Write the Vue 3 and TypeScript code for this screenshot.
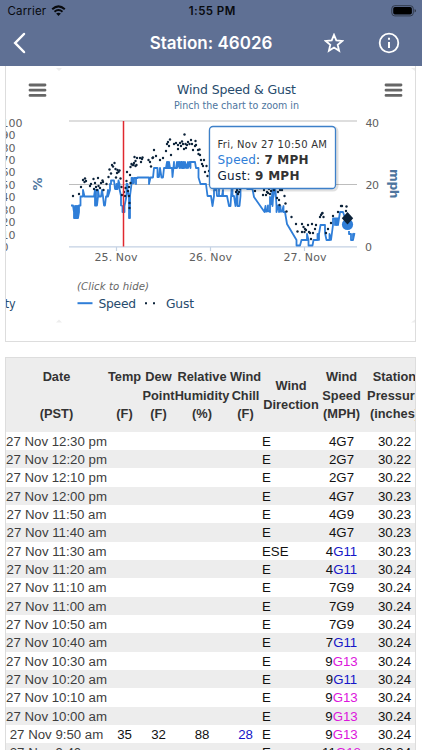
<script setup lang="ts">
interface Row {
  date: string
  temp?: string
  dew?: string
  rh?: string
  chill?: string
  dir: string
  speed: string
  gust: string
  level: 'calm' | 'fresh' | 'strong'
  pressure: string
}

function wind(date: string, speed: string, gust: string, pressure: string, dir = 'E'): Row {
  const g = Number(gust)
  return {
    date: '27 Nov ' + date, dir, speed, gust, pressure,
    level: g >= 13 ? 'strong' : g >= 11 ? 'fresh' : 'calm',
  }
}

const rows: Row[] = [
  wind('12:30 pm', '4', '7', '30.22'),
  wind('12:20 pm', '2', '7', '30.22'),
  wind('12:10 pm', '2', '7', '30.22'),
  wind('12:00 pm', '4', '7', '30.23'),
  wind('11:50 am', '4', '9', '30.23'),
  wind('11:40 am', '4', '7', '30.23'),
  wind('11:30 am', '4', '11', '30.23', 'ESE'),
  wind('11:20 am', '4', '11', '30.24'),
  wind('11:10 am', '7', '9', '30.24'),
  wind('11:00 am', '7', '9', '30.24'),
  wind('10:50 am', '7', '9', '30.24'),
  wind('10:40 am', '7', '11', '30.24'),
  wind('10:30 am', '9', '13', '30.24'),
  wind('10:20 am', '9', '11', '30.24'),
  wind('10:10 am', '9', '13', '30.24'),
  wind('10:00 am', '9', '13', '30.24'),
  { ...wind('9:50 am', '9', '13', '30.24'), temp: '35', dew: '32', rh: '88', chill: '28' },
  wind('9:40 am', '11', '18', '30.24'),
]

const columns: string[][] = [
  ['Date', '', '(PST)'],
  ['Temp', '', '(F)'],
  ['Dew', 'Point', '(F)'],
  ['Relative', 'Humidity', '(%)'],
  ['Wind', 'Chill', '(F)'],
  ['Wind', 'Direction'],
  ['Wind', 'Speed', '(MPH)'],
  ['Station', 'Pressure', '(inches)'],
]

const humidityTicks = [100, 90, 80, 70, 60, 50, 40, 30, 20, 10, 0]

const speedPath =
  'M71 205.5H73L74 212V218H75V206V218H76V206V218H77V206V218H78V206V218L79 212V205.5H80.5V196.5H83V190L84.5 196.5H94L95 190V205.5H96V190V205.5H97L98 196.5V190L99 196.5H101L102 190L103 196.5L104 205.5H105L106 196.5H107L108 190V196.5L110 190V184H111V180.5H114L115 189H116.5V184L117.5 189L118.5 180.5L119.5 184V189L121 196V205.5L122.5 206V212H124.5V206L126.5 196V184H127.5V190L129 196.5V218H130V196L131.5 184V178H132.5V183H134V178H136V184V178H137.5V177.5H149V184L150.5 177.5H153L154 168H157.5V177H159L160 168L161.5 177.5H163L164 168H166L167 162V168H168V162L169 168V162L170 168H172L172.5 177L174 162V168H176L177 162V168L178.5 162L179.5 168V162L181 168V162H182V168H183.5V162L185 168V162L186.5 168L188 162V168L189.5 162L190.5 168V162H195L196 168H198.5V177.5L200.5 184H206L207.5 196H211L212.5 206L214 196V190H216V184L217 196H219V184V196H222L223 190V196H227L229 206H230.5L231.5 190L232.5 184V196H234L235.5 206L236.5 196L237.5 184V206H239.5L240.5 196V190L242 180V185H245L246 180L247 189H252.5L254 197L264.5 212L265.5 206V211.5H267L268 205.5V211L270 212V197L271.5 204L272.5 188V206L274 184L275.5 197V190L276.5 206V212L278 205.5H279V212L280.5 206V211.5H282L283.5 206V212H285L287 224L296.5 240V245.5H300L301.5 240H307V234L308.5 240V245.5H312.5L313.5 240H317.5V234L319 240V234L320.5 225H325V233L326.5 240H329.5V234L331 240L333 225V218.5H335V225V218.5H336.5V225V218.5H338V225L340 212H343L345 218V223.5L348 225'

const gusts: [number, number][] = [
  [73, 196], [79, 194], [81, 187], [83, 180], [84.5, 182], [85, 178.5], [86, 181], [90, 186], [91, 184],
  [93.5, 179], [94, 189], [95, 183], [96, 187], [97, 190], [98, 178], [98.5, 186], [100, 188], [101, 183],
  [102.5, 180.5], [103, 182], [103.5, 190], [106.5, 184], [108.5, 177], [109.5, 169.5], [111, 173.5],
  [112, 165], [113, 166.5], [114.5, 163], [115.5, 169], [116, 177.5], [117, 173], [117.5, 170],
  [118.5, 172], [119.5, 170.5], [120.5, 178.5], [121.5, 187], [122, 195], [124, 192], [125, 196],
  [125.5, 188], [126.5, 181], [127, 172], [128, 191], [129, 187], [129, 196], [129.5, 203], [129.5, 208],
  [130, 175], [130.5, 183], [130.5, 167], [131.5, 164], [132.5, 165], [133.5, 165], [134, 163],
  [134.5, 157], [135.5, 161], [136.5, 165], [137, 158], [135.5, 166], [140, 158], [141, 162],
  [142, 159], [142.5, 157.5], [148.5, 160], [150, 162], [151, 166.5], [152.5, 158], [154, 150],
  [153, 157.5], [156, 156], [160, 160], [163, 158], [166, 151], [167, 144], [168, 142], [169, 146],
  [170, 139.5], [171, 155], [174, 144], [176, 143], [178, 145], [178, 149], [180, 143], [181, 146],
  [182, 141.5], [183, 144], [184, 149], [184.5, 134.5], [185.5, 144], [186, 148], [187, 145], [188, 142],
  [189.5, 144], [191, 140], [192, 144], [193, 150], [195, 146], [195.5, 141], [196, 145], [198, 150],
  [198.5, 154], [199.5, 149.5], [200, 155], [201, 160], [202, 164], [203, 166], [204, 160], [205, 172],
  [206.5, 166], [207.5, 176], [209, 171],
  [236, 192], [237, 190], [238, 194], [239, 192], [240, 189], [255, 191], [263, 195], [264, 190],
  [266, 195], [267, 192], [268, 193], [269, 189], [270, 194], [271, 191], [274, 190], [277, 198],
  [278, 192], [279, 200], [280, 190], [279.5, 205], [282, 190], [284.5, 196], [285.5, 203.5], [286.5, 211.5],
  [291.5, 217], [296, 224], [297.5, 231.5], [302, 224], [302, 232], [303.5, 227], [304.5, 232],
  [305, 229], [306, 230], [308, 225], [309, 232], [310, 233], [311, 239], [312, 224], [313, 233],
  [315, 229], [316, 225], [320, 217], [321, 215], [322, 213.5], [322.5, 213], [323.5, 217],
  [326, 233], [328, 229], [331, 223], [333, 216], [338, 212], [341, 206], [342, 206], [346, 211], [346.5, 206.5],
]
</script>

<template>
  <div class="screen">
    <header class="top">
      <div class="status">
        <div class="carrier">
          <span>Carrier</span>
          <svg width="15" height="12" viewBox="0 0 15 12" fill="none" stroke="#080a0e">
            <path d="M1.2 4.2Q7.5 -1.4 13.8 4.2" stroke-width="2" />
            <path d="M3.5 6.7Q7.5 3.2 11.5 6.7" stroke-width="1.9" />
            <path d="M7.5 11L5.1 8.6Q7.5 6.8 9.9 8.6Z" fill="#080a0e" stroke="none" />
          </svg>
        </div>
        <span class="clock">1:55 PM</span>
        <svg class="battery" width="26" height="12" viewBox="0 0 26 12">
          <rect x=".8" y=".7" width="21.5" height="10.2" rx="3" fill="none" stroke="#2d3443" stroke-width=".9" />
          <rect x="2.2" y="2.1" width="18.7" height="7.4" rx="1.7" fill="#000" />
          <path d="M23.6 4V7.6Q25 7 25 5.8T23.6 4" fill="#2d3443" />
        </svg>
      </div>
      <div class="nav">
        <svg class="back" width="14" height="22" viewBox="0 0 14 22"><path d="M11 2L2.2 11L11 20" fill="none" stroke="#fff" stroke-width="2.5" stroke-linecap="round" /></svg>
        <h1>Station: 46026</h1>
        <div class="actions">
          <svg width="20" height="20" viewBox="0 0 20 20" fill="none" stroke="#fff" stroke-width="1.8"><path d="M10 1.800L12.300 7.400L18.300 7.900L13.700 11.800L15.100 17.700L10 14.500L4.900 17.700L6.300 11.800L1.700 7.900L7.700 7.400Z" /></svg>
          <svg width="22" height="22" viewBox="0 0 22 22"><circle cx="11" cy="11" r="9.300" fill="none" stroke="#fff" stroke-width="1.800" /><path d="M10 5.800H12V7.800H10ZM10 10H12V16H10Z" fill="#fff" /></svg>
        </div>
      </div>
    </header>

    <section class="chart-card">
      <svg class="chart" width="409" height="275" viewBox="6 66 409 275">
        <path d="M56 68h6l-3 3zM56 322.500h6l-3-3zM411 68h4v3zM411 322.500h4v-3z" fill="#ededed" />
        <g stroke="#666" stroke-width="2.800" stroke-linecap="round">
          <path d="M30 85H45M30 90.200H45M30 95.400H45M386 85H401M386 90.200H401M386 95.400H401" />
        </g>

        <g class="tick">
          <text v-for="(t, i) in humidityTicks" :key="t" :x="t === 100 ? 22.5 : t === 0 ? 8.5 : 15.5" :y="126.6 + i * 12.45" text-anchor="end">{{ t }}</text>
        </g>
        <text class="unit" transform="translate(42 190.500) rotate(-90)" font-size="12.500" textLength="13" lengthAdjust="spacingAndGlyphs">%</text>
        <text class="label" x="15.700" y="307.500" font-size="12.500" text-anchor="end" textLength="11" lengthAdjust="spacingAndGlyphs">ty</text>

        <text class="label" x="177" y="94" font-size="12.500" textLength="119">Wind Speed &amp; Gust</text>
        <text class="sub" x="174" y="109" font-size="10" textLength="125" lengthAdjust="spacingAndGlyphs">Pinch the chart to zoom in</text>

        <path d="M69 121H357M69 184.500H357" stroke="#bdbdbd" stroke-width="1.200" />
        <path d="M69 246.800H357M116.500 247V251M210.500 247V251M304.500 247V251" stroke="#c3d1e3" stroke-width="1.200" fill="none" />
        <path :d="speedPath" class="speed" />
        <path d="M349 231V234H351V240V234V240H353V234V240L354.500 233" class="speed" />
        <circle v-for="(g, i) in gusts" :key="i" :cx="g[0]" :cy="g[1]" r="1.200" fill="#0d233a" />
        <path d="M123.500 121V246.500" stroke="#e0282f" stroke-width="1.500" />
        <circle cx="347.500" cy="224.500" r="5.600" fill="#2f7ed8" />
        <path d="M347.500 212L353.200 218.200L347.500 224.400L341.800 218.200Z" fill="#0d233a" />

        <g class="axis">
          <text x="94.500" y="261" textLength="43">25. Nov</text>
          <text x="189" y="261" textLength="43">26. Nov</text>
          <text x="283.500" y="261" textLength="43">27. Nov</text>
          <text x="365.500" y="126.500" textLength="13.500">40</text>
          <text x="365.500" y="188.700" textLength="13.500">20</text>
          <text x="365" y="251">0</text>
        </g>
        <text class="unit" transform="translate(389.500 169) rotate(90)" font-size="12.300" textLength="29.500">mph</text>

        <rect x="210.500" y="128" width="126" height="61.500" rx="3.500" fill="none" stroke="#000" stroke-opacity=".12" stroke-width="4" />
        <rect x="209.500" y="126.500" width="126" height="62" rx="3.500" fill="#fff" stroke="#3d80c9" stroke-width="1.300" />
        <g fill="#333">
          <text x="217.500" y="147.500" font-size="10" textLength="109.500">Fri, Nov 27 10:50 AM</text>
          <text x="217.500" y="163.800" font-size="12" textLength="91"><tspan fill="#2f7ed8">Speed</tspan>: <tspan font-weight="700">7 MPH</tspan></text>
          <text x="217.500" y="180" font-size="12" textLength="82"><tspan fill="#0d233a">Gust</tspan>: <tspan font-weight="700">9 MPH</tspan></text>
        </g>

        <text x="77" y="290" font-size="10.200" font-style="italic" fill="#666" textLength="72">(Click to hide)</text>
        <path d="M77.500 303.200H92.500" stroke="#2f7ed8" stroke-width="2" />
        <text class="label" x="98.500" y="307.500" font-size="12.300" textLength="37.500">Speed</text>
        <path d="M145 302.300h2v2h-2zM153 302.300h2v2h-2z" fill="#0d233a" />
        <text class="label" x="166" y="307.500" font-size="12.300" textLength="28">Gust</text>
      </svg>
    </section>

    <section class="table-card">
      <div class="line head">
        <div v-for="(c, i) in columns" :key="i" class="th"><span v-for="(l, j) in c" :key="j">{{ l }}</span></div>
      </div>
      <div v-for="(r, i) in rows" :key="i" class="line row">
        <span class="date">{{ r.date }}</span>
        <span>{{ r.temp }}</span>
        <span>{{ r.dew }}</span>
        <span>{{ r.rh }}</span>
        <span class="fresh">{{ r.chill }}</span>
        <span class="dir">{{ r.dir }}</span>
        <span>{{ r.speed }}<b :class="r.level">G{{ r.gust }}</b></span>
        <span>{{ r.pressure }}</span>
      </div>
    </section>
  </div>
</template>

<style>
body { margin: 0; overflow: hidden; background: #fff; }
</style>

<style scoped>
.screen { width: 422px; height: 750px; overflow: hidden; background: #fff; font-family: "Liberation Sans", Arial, sans-serif; }
.top { height: 65.500px; background: #5f7094; font-family: Inter, sans-serif; }
.status { display: grid; grid-template-columns: 1fr auto 1fr; align-items: center; height: 22px; padding: 0 5px 0 7.500px; color: #080a0e; font-size: 11.500px; }
.carrier { display: flex; align-items: center; gap: 5px; letter-spacing: .15px; }
.clock { font-weight: 600; letter-spacing: .45px; }
.battery { justify-self: end; }
.nav { display: grid; grid-template-columns: 1fr auto 1fr; align-items: center; height: 42px; padding: 0 22px 0 13px; }
h1 { margin: 0; color: #fff; font-size: 17px; font-weight: 600; line-height: 22px; padding-left: 9px; white-space: nowrap; }
.actions { display: flex; justify-content: flex-end; align-items: center; gap: 34px; }
.chart-card { box-sizing: border-box; width: 411px; height: 276.500px; margin-left: 5px; border: 1px solid #ddd; border-top: 0; overflow: hidden; }
.chart { display: block; font-family: "DejaVu Sans", Verdana, sans-serif; }
.tick, .axis { font-size: 11px; fill: #606060; }
.label { fill: #274b6d; }
.sub { fill: #4d759e; }
.unit { fill: #4d759e; font-weight: 700; }
.speed { fill: none; stroke: #2f7ed8; stroke-width: 1.800; stroke-linejoin: round; }
.table-card { box-sizing: border-box; width: 411px; height: 400px; margin: 15px 0 0 5px; border: 1px solid #ddd; overflow: hidden; }
.line { display: grid; grid-template-columns: 101px 35px 33px 54px 33px 58px 43px 63px; width: 420px; }
.head { box-sizing: border-box; height: 73.500px; padding-top: 2px; background: #ededed; color: #333; font-size: 12.800px; font-weight: 700; line-height: 18.330px; }
.th { display: flex; flex-direction: column; align-items: center; justify-content: center; white-space: nowrap; }
.th span { min-height: 18.330px; }
.row { height: 18.350px; line-height: 19px; font-size: 13.250px; color: #111; text-align: center; white-space: nowrap; }
.row:nth-child(odd) { background: #ededed; }
.date { color: #3d3d3d; }
.dir { text-align: left; }
b { font-weight: 400; }
.fresh { color: #1515c8; }
.strong { color: #dc16dc; }
</style>
